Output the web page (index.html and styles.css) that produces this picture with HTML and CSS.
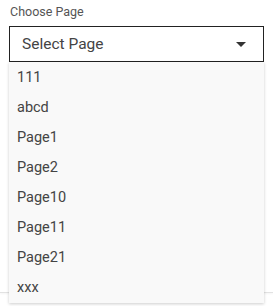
FILE: index.html
```html
<!DOCTYPE html>
<html lang="en">
<head>
    <meta charset="UTF-8">
    <meta name="viewport" content="width=device-width, initial-scale=1.0">
    <title>Choose Page</title>
    <link rel="stylesheet" href="styles.css">
</head>
<body>
    <div class="page-field">
        <label class="field-label">Choose Page</label>
        <div class="select-wrap">
            <div class="select-box">
                <span class="select-value">Select Page</span>
                <svg class="select-arrow" width="10" height="5" viewBox="0 0 10 5"><path d="M0 0h10L5 5z" fill="#333"/></svg>
            </div>
            <ul class="select-menu">
                <li>111</li>
                <li>abcd</li>
                <li>Page1</li>
                <li>Page2</li>
                <li>Page10</li>
                <li>Page11</li>
                <li>Page21</li>
                <li>xxx</li>
            </ul>
        </div>
    </div>
    <div class="below-line"></div>
</body>
</html>
```

FILE: styles.css
```css
body {
    margin: 0;
    font-family: Roboto, "Noto Sans", sans-serif;
    background: #fff;
    color: #444;
    position: relative;
    height: 306px;
    overflow: hidden;
}

.page-field {
    padding: 4px 9px 0 9px;
}

.field-label {
    display: block;
    font-size: 12.5px;
    color: #555;
    line-height: 16px;
    margin-left: 1px;
    margin-bottom: 6px;
}

.select-wrap {
    position: relative;
    z-index: 2;
}

.select-box {
    height: 34px;
    border: 1px solid #222;
    display: flex;
    align-items: center;
    justify-content: space-between;
    padding: 0 17px 0 12px;
    background: #fff;
}

.select-value {
    font-size: 15.5px;
    color: #444;
}

.select-menu {
    position: absolute;
    left: 0;
    right: 0;
    top: 36px;
    margin: 0;
    padding: 1px 0 0 0;
    list-style: none;
    background: #f9f9f9;
    box-shadow: 0 1px 3px rgba(0, 0, 0, 0.2);
}

.select-menu li {
    height: 30px;
    line-height: 30px;
    padding-left: 8px;
    font-size: 14.5px;
    color: #444;
}

.below-line {
    position: absolute;
    left: 0;
    right: 0;
    top: 292px;
    height: 1px;
    background: #e2e2e2;
    box-shadow: 0 1px 2px rgba(0, 0, 0, 0.06);
}
```
